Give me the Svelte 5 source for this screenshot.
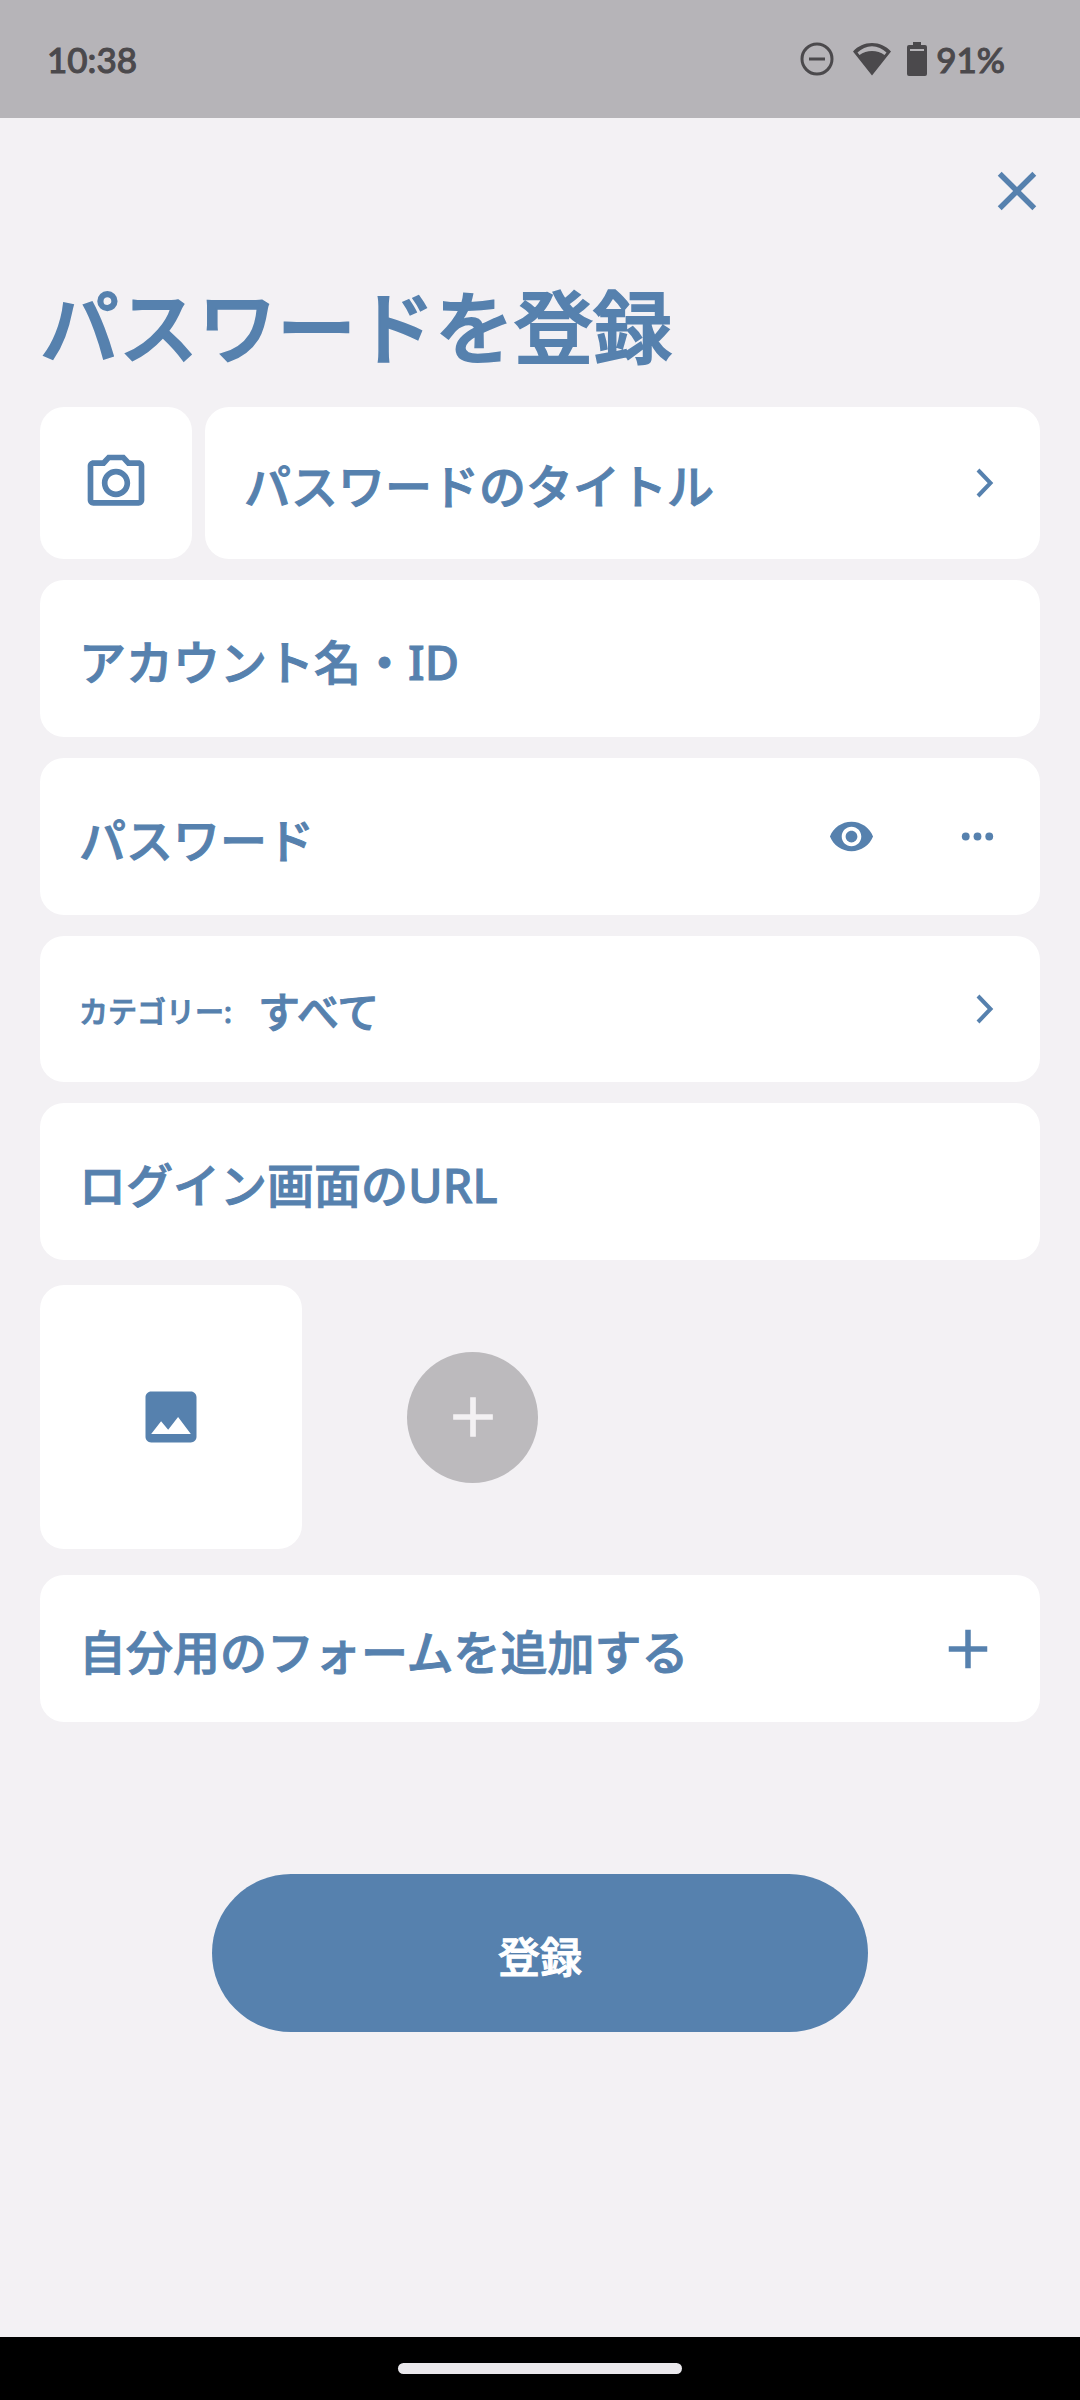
<script>
  let title = $state('パスワードのタイトル');
  let account = $state('');
  let password = $state('');
  let url = $state('');
  let visible = $state(false);
</script>

<div class="screen">
  <header class="status">
    <span class="time">10:38</span>
    <div class="indicators">
      <svg class="dnd" viewBox="0 0 34 34" aria-hidden="true">
        <circle cx="17" cy="17" r="15" fill="none" stroke="currentColor" stroke-width="3" />
        <path d="M9 15.500h16v3H9z" fill="currentColor" />
      </svg>
      <svg class="wifi" viewBox="0 0 38 34" aria-hidden="true">
        <path d="M19 33.500 0 9.500C5 4 11.500 1 19 1s14 3 19 8.500zM4.500 10.500l2 2.500C10 10.200 14.500 9 19 9s9 1.200 12.500 4l2-2.500C29.500 6.500 24.500 4.200 19 4.200S8.500 6.500 4.500 10.500z" fill="currentColor" fill-rule="evenodd" />
      </svg>
      <svg class="battery" viewBox="0 0 20 34" aria-hidden="true">
        <path d="M6 0h8v3h4a2 2 0 0 1 2 2v27a2 2 0 0 1-2 2H2a2 2 0 0 1-2-2V5a2 2 0 0 1 2-2h4zM3 7v2h14V7z" fill="currentColor" fill-rule="evenodd" />
      </svg>
      <span class="percent">91%</span>
    </div>
  </header>

  <main>
    <button class="close" aria-label="閉じる">
      <svg viewBox="0 0 24 24"><path d="M19 6.410 17.590 5 12 10.590 6.410 5 5 6.410 10.590 12 5 17.590 6.410 19 12 13.410 17.590 19 19 17.590 13.410 12z" fill="currentColor" /></svg>
    </button>

    <h1>パスワードを登録</h1>

    <form onsubmit={(e) => e.preventDefault()}>
      <div class="title-row">
        <button type="button" class="card camera" aria-label="写真を選択">
          <svg class="icon-large" viewBox="0 0 24 24"><path d="M14.120 4l1.830 2H20v12H4V6h4.050l1.830-2h4.240M15 2H9L7.170 4H4c-1.100 0-2 .9-2 2v12c0 1.100.9 2 2 2h16c1.100 0 2-.9 2-2V6c0-1.100-.9-2-2-2h-3.170L15 2zm-3 7c1.650 0 3 1.350 3 3s-1.350 3-3 3-3-1.350-3-3 1.350-3 3-3m0-2c-2.760 0-5 2.240-5 5s2.240 5 5 5 5-2.240 5-5-2.240-5-5-5z" fill="currentColor" /></svg>
        </button>
        <button type="button" class="card choice title">
          <span class="label">{title}</span>
          <svg class="chevron" viewBox="0 0 18 30"><path d="M2 2 14.500 15 2 28" fill="none" stroke="currentColor" stroke-width="4" /></svg>
        </button>
      </div>

      <div class="card field">
        <input type="text" aria-label="アカウント名・ID" placeholder="アカウント名・ID" bind:value={account} />
      </div>

      <div class="card field">
        <input type={visible ? 'text' : 'password'} aria-label="パスワード" placeholder="パスワード" bind:value={password} />
        <div class="tools">
          <button type="button" class="tool" aria-label="パスワードを表示" onclick={() => (visible = !visible)}>
            <svg viewBox="0 0 24 24"><path d="M12 4.500C7 4.500 2.730 7.610 1 12c1.730 4.390 6 7.500 11 7.500s9.270-3.110 11-7.500c-1.730-4.390-6-7.500-11-7.500zM12 17c-2.760 0-5-2.240-5-5s2.240-5 5-5 5 2.240 5 5-2.240 5-5 5zm0-8c-1.660 0-3 1.340-3 3s1.340 3 3 3 3-1.340 3-3-1.340-3-3-3z" fill="currentColor" /></svg>
          </button>
          <button type="button" class="tool" aria-label="その他">
            <svg viewBox="0 0 24 24" fill="currentColor"><circle cx="6" cy="12" r="2" /><circle cx="12" cy="12" r="2" /><circle cx="18" cy="12" r="2" /></svg>
          </button>
        </div>
      </div>

      <button type="button" class="card choice category">
        <span class="pair"><span class="caption">カテゴリー:</span><span class="value">すべて</span></span>
        <svg class="chevron" viewBox="0 0 18 30"><path d="M2 2 14.500 15 2 28" fill="none" stroke="currentColor" stroke-width="4" /></svg>
      </button>

      <div class="card field">
        <input type="url" aria-label="ログイン画面のURL" placeholder="ログイン画面のURL" bind:value={url} />
      </div>

      <div class="images">
        <button type="button" class="card picture" aria-label="画像">
          <svg class="icon-large" viewBox="0 0 24 24"><path d="M21 19V5c0-1.100-.9-2-2-2H5c-1.100 0-2 .9-2 2v14c0 1.100.9 2 2 2h14c1.100 0 2-.9 2-2zM8.500 13.500l2.500 3.010L14.500 12l4.500 6H5l3.500-4.500z" fill="currentColor" /></svg>
        </button>
        <button type="button" class="add" aria-label="画像を追加">
          <svg class="icon-large" viewBox="0 0 24 24"><path d="M19 13h-6v6h-2v-6H5v-2h6V5h2v6h6z" fill="currentColor" /></svg>
        </button>
      </div>

      <button type="button" class="card choice custom">
        <span class="label">自分用のフォームを追加する</span>
        <svg class="plus" viewBox="0 0 24 24"><path d="M19 13h-6v6h-2v-6H5v-2h6V5h2v6h6z" fill="currentColor" /></svg>
      </button>

      <button type="submit" class="submit">登録</button>
    </form>
  </main>

  <footer class="nav"><span class="handle"></span></footer>
</div>

<style>
  :global(body) {
    margin: 0;
    background: #f3f1f4;
  }

  .screen {
    display: flex;
    flex-direction: column;
    min-height: 100vh;
    color: #5681ae;
    font-family: 'Noto Sans', 'Noto Sans CJK JP', sans-serif;
    font-weight: 500;
  }

  svg {
    display: block;
    flex: none;
  }

  button,
  input {
    box-sizing: border-box;
    margin: 0;
    padding: 0;
    border: 0;
    background: none;
    color: inherit;
    font: inherit;
  }

  button {
    cursor: pointer;
  }

  .status {
    display: flex;
    align-items: center;
    justify-content: space-between;
    box-sizing: border-box;
    height: 118px;
    padding: 0 75px 0 47px;
    background: #b6b4b8;
    color: #4b494c;
    font-family: Lato, Roboto, sans-serif;
    font-size: 35px;
    line-height: 48px;
    -webkit-text-stroke: 1px currentColor;
  }

  .indicators {
    display: flex;
    align-items: center;
  }

  .dnd {
    width: 34px;
    height: 34px;
    margin-right: 19px;
  }

  .wifi {
    width: 38px;
    height: 34px;
    margin-right: 16px;
  }

  .battery {
    width: 20px;
    height: 34px;
    margin-right: 9px;
  }

  main {
    display: flex;
    flex: 1;
    flex-direction: column;
    padding: 40px 40px 0;
  }

  .close {
    align-self: flex-end;
    margin-right: -10px;
  }

  .close svg,
  .plus {
    width: 66px;
    height: 66px;
  }

  h1 {
    margin: 42px 0 18px;
    font-size: 79px;
    font-weight: 500;
    line-height: 123px;
    -webkit-text-stroke: 2px currentColor;
  }

  form {
    display: flex;
    flex-direction: column;
    gap: 21px;
    font-size: 47px;
    line-height: 70px;
    -webkit-text-stroke: 1px currentColor;
  }

  .card {
    display: flex;
    align-items: center;
    border-radius: 24px;
    background: #fff;
  }

  .title-row {
    display: flex;
    gap: 13px;
  }

  .camera {
    justify-content: center;
    width: 152px;
    height: 152px;
  }

  .icon-large {
    width: 68px;
    height: 68px;
  }

  .choice {
    justify-content: space-between;
    padding: 0 46px 0 39px;
    text-align: left;
  }

  .title {
    flex: 1;
  }

  .label,
  .pair {
    padding-top: 6px;
  }

  .chevron {
    width: 18px;
    height: 30px;
  }

  .field {
    height: 157px;
    padding: 0 39px;
  }

  input {
    flex: 1;
    min-width: 0;
    height: 100%;
    padding-top: 6px;
    outline: none;
  }

  input::placeholder {
    color: #5681ae;
    opacity: 1;
  }

  .tools {
    display: flex;
    gap: 79px;
  }

  .tool svg {
    width: 47px;
    height: 47px;
  }

  .category {
    height: 146px;
  }

  .pair {
    display: flex;
    align-items: center;
    gap: 26px;
  }

  .caption {
    font-size: 29px;
  }

  .value {
    font-size: 42px;
  }

  .images {
    display: flex;
    align-items: center;
    gap: 105px;
    padding: 4px 0 5px;
  }

  .picture {
    justify-content: center;
    width: 262px;
    height: 264px;
  }

  .add {
    display: grid;
    place-items: center;
    width: 131px;
    height: 131px;
    border-radius: 50%;
    background: #bcbabd;
    color: #f3f1f3;
  }

  .custom {
    height: 147px;
    padding-right: 39px;
  }

  .submit {
    align-self: center;
    width: 656px;
    max-width: 100%;
    height: 158px;
    margin-top: 131px;
    padding-top: 8px;
    border-radius: 79px;
    background: #5681ae;
    color: #fff;
    font-size: 42px;
  }

  .nav {
    display: flex;
    align-items: center;
    justify-content: center;
    height: 63px;
    background: #000;
  }

  .handle {
    width: 284px;
    height: 11px;
    border-radius: 6px;
    background: #eae8ec;
  }
</style>
